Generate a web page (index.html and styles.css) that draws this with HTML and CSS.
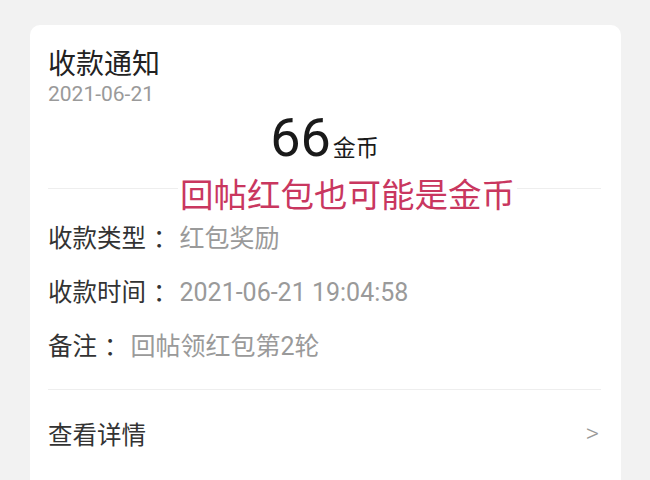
FILE: index.html
```html
<!DOCTYPE html>
<html lang="zh-CN">
<head>
<meta charset="utf-8">
<link rel="stylesheet" href="styles.css">
</head>
<body>
<div class="card">
  <div class="head">
    <div class="title">收款通知</div>
    <div class="date">2021-06-21</div>
    <div class="amount"><span class="num">66</span><span class="unit">金币</span></div>
  </div>
  <div class="note-wrap">
    <div class="annot">回帖红包也可能是金币</div>
  </div>
  <div class="rows">
    <div class="row"><span class="label">收款类型<span class="colon">：</span></span><span class="value">红包奖励</span></div>
    <div class="row"><span class="label">收款时间<span class="colon">：</span></span><span class="value">2021-06-21 19:04:58</span></div>
    <div class="row"><span class="label">备注<span class="colon">：</span></span><span class="value">回帖领红包第2轮</span></div>
  </div>
  <div class="detail">
    <span class="detail-text">查看详情</span>
    <span class="arrow">&gt;</span>
  </div>
</div>
</body>
</html>
```
FILE: styles.css
```css
html, body {
  margin: 0;
  padding: 0;
}
body {
  background: #f2f2f2;
  font-family: Roboto, "Noto Sans CJK SC", sans-serif;
  width: 650px;
  height: 480px;
  overflow: hidden;
}
.card {
  margin: 25px 0 0 30px;
  width: 591px;
  height: 470px;
  background: #fff;
  border-radius: 10px 10px 0 0;
  box-sizing: border-box;
  padding: 0 18px;
}
.head {
  padding-top: 23px;
  border-bottom: 1px solid #eeeeee;
  height: 164px;
  box-sizing: border-box;
  margin-right: 2px;
}
.title {
  font-size: 28px;
  line-height: 34px;
  color: #222;
}
.date {
  font-size: 21px;
  line-height: 24px;
  color: #9a9a9a;
}
.amount {
  text-align: center;
  margin-top: 4px;
  color: #1a1a1a;
  line-height: 56px;
}
.num {
  font-size: 54px;
}
.unit {
  font-size: 23px;
  margin-left: 2px;
}
.note-wrap {
  position: relative;
  height: 0;
}
.annot {
  position: absolute;
  left: 130px;
  top: -13px;
  font-size: 33.5px;
  line-height: 40px;
  color: #c9375f;
  background: #fff;
  padding: 0 2px;
  white-space: nowrap;
}
.rows {
  padding-top: 23px;
  border-bottom: 1px solid #eeeeee;
  height: 201px;
  box-sizing: border-box;
  margin-right: 2px;
}
.row {
  display: flex;
  align-items: baseline;
  height: 54px;
  line-height: 54px;
  font-size: 24.5px;
}
.label {
  color: #333;
}
.colon {
  margin-left: 7px;
}
.value {
  color: #9a9a9a;
  margin-left: 2px;
  font-size: 25px;
}
.detail {
  display: flex;
  justify-content: space-between;
  align-items: center;
  height: 86px;
  font-size: 24.5px;
  color: #333;
  margin-right: 2px;
}
.arrow {
  color: #999;
  font-size: 26px;
  font-weight: 300;
  margin-right: 2px;
}
```
